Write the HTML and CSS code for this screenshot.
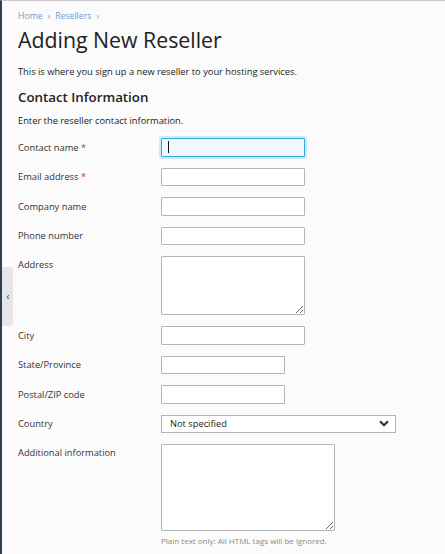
FILE: index.html
```html
<!DOCTYPE html>
<html>
<head>
<meta charset="utf-8">
<link rel="stylesheet" href="styles.css">
</head>
<body>
<div class="page">
  <div class="collapse-tab"><span class="chev">&lsaquo;</span></div>
  <main class="content">
    <nav class="breadcrumb">
      <a>Home</a><span class="sep">&rsaquo;</span><a>Resellers</a><span class="sep">&rsaquo;</span>
    </nav>
    <h1 class="title">Adding New Reseller</h1>
    <p class="desc">This is where you sign up a new reseller to your hosting services.</p>
    <h2 class="section">Contact Information</h2>
    <p class="intro">Enter the reseller contact information.</p>
    <div class="form">
      <div class="row">
        <label class="label">Contact name <span class="req">*</span></label>
        <div class="field"><input class="input w144 focused" type="text"><span class="caret"></span></div>
      </div>
      <div class="row">
        <label class="label">Email address <span class="req">*</span></label>
        <div class="field"><input class="input w144" type="text"></div>
      </div>
      <div class="row">
        <label class="label">Company name</label>
        <div class="field"><input class="input w144" type="text"></div>
      </div>
      <div class="row">
        <label class="label">Phone number</label>
        <div class="field"><input class="input w144" type="text"></div>
      </div>
      <div class="row top">
        <label class="label">Address</label>
        <div class="field"><textarea class="input area1"></textarea></div>
      </div>
      <div class="row">
        <label class="label">City</label>
        <div class="field"><input class="input w144" type="text"></div>
      </div>
      <div class="row">
        <label class="label">State/Province</label>
        <div class="field"><input class="input w124" type="text"></div>
      </div>
      <div class="row">
        <label class="label">Postal/ZIP code</label>
        <div class="field"><input class="input w124" type="text"></div>
      </div>
      <div class="row">
        <label class="label">Country</label>
        <div class="field">
          <div class="select">
            <span>Not specified</span>
            <svg class="arrow" width="10" height="7" viewBox="0 0 10 7"><path d="M1 1.2 L5 5.2 L9 1.2" fill="none" stroke="#333" stroke-width="2.2"/></svg>
          </div>
        </div>
      </div>
      <div class="row top">
        <label class="label">Additional information</label>
        <div class="field">
          <textarea class="input area2"></textarea>
          <div class="hint">Plain text only: All HTML tags will be ignored.</div>
        </div>
      </div>
    </div>
  </main>
</div>
</body>
</html>
```
FILE: styles.css
```css
* { box-sizing: border-box; }
html, body { margin: 0; padding: 0; }
body {
  background: #fbfbfb;
  font-family: "Open Sans", "Noto Sans", sans-serif;
  color: #333;
  height: 554px;
  overflow: hidden;
}
.page {
  position: relative;
  height: 554px;
  border-left: 2px solid #2f3f50;
  border-top: 1px solid #c9c9c9;
}
.collapse-tab {
  position: absolute;
  left: 0;
  top: 266px;
  width: 11px;
  height: 59px;
  background: #e6e6e6;
  border-radius: 0 3px 3px 0;
  display: flex;
  align-items: center;
  justify-content: center;
}
.chev { font-size: 11px; color: #444; line-height: 1; margin-left: 1px; margin-top: -2px; }
.content { padding: 9px 0 0 16px; }
.breadcrumb { font-size: 8.7px; color: #6d9ccc; line-height: 12px; height: 12px; }
.breadcrumb a { color: #6d9ccc; }
.sep { margin: 0 5px; color: #888; }
.title {
  margin: 4px 0 0;
  font-size: 21.3px;
  font-weight: 400;
  color: #222;
  line-height: 28px;
}
.desc { margin: 12px 0 0; font-size: 9.3px; color: #222; line-height: 12px; }
.section { margin: 11px 0 0; font-size: 13.3px; font-weight: 600; color: #222; line-height: 16px; }
.intro { margin: 10px 0 0; font-size: 9.3px; color: #222; line-height: 12px; }
.form { margin-top: 11px; display: flex; flex-direction: column; gap: 11px; }
.row { display: flex; align-items: center; }
.row.top { align-items: flex-start; }
.row.top .label { padding-top: 3px; }
.label { width: 143px; flex: none; font-size: 9.3px; color: #333; line-height: 12px; padding-top: 1px; }
.req { color: #c0392b; }
.field { position: relative; }
.input {
  display: block;
  height: 18.5px;
  border: 1px solid #b4b4b4;
  background: #fff;
  border-radius: 1px;
  margin: 0;
  padding: 0;
  font: inherit;
}
.w144 { width: 144px; }
.w124 { width: 124px; }
.focused {
  border-color: #31a8e5;
  background: #f0f8fe;
  box-shadow: 0 0 0 2px #cfe8fa;
  outline: none;
}
.caret {
  position: absolute;
  left: 7px;
  top: 3px;
  width: 1px;
  height: 12px;
  background: #111;
}
textarea.input { resize: both; }
.area1 { width: 144px; height: 59px; }
.area2 { width: 174px; height: 87px; }
.select {
  width: 235px;
  height: 18.5px;
  border: 1px solid #b4b4b4;
  background: #fff;
  display: flex;
  align-items: center;
  justify-content: space-between;
  padding: 0 6px 0 8px;
  font-size: 9.3px;
  color: #222;
}
.arrow { display: block; }
.hint { margin-top: 4px; font-size: 8px; color: #8a8a8a; line-height: 11px; }
```
